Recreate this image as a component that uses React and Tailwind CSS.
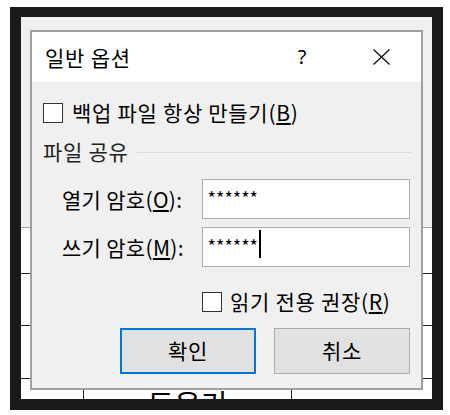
import React from "react";

function Checkbox() {
  return <div className="w-[20px] h-[20px] border-[1.5px] border-[#333] bg-white shrink-0" />;
}

export default function App() {
  const font = "font-['Noto_Sans_CJK_KR','Noto_Sans',sans-serif]";
  return (
    <div className={`w-[450px] h-[415px] bg-white pt-[7px] pl-[10px] ${font} text-black`}>
      <div className="w-[433px] h-[403px] bg-[#1a1a1a] pt-[10px] pl-[11px]">
        <div className="w-[411px] h-[382px] relative overflow-hidden bg-white">
          {/* background sheet */}
          <div className="h-[211px] bg-[#f0f0f0] border-b border-[#a0a0a0]" />
          <div className="grid grid-cols-[63px_208px_1fr] h-[46px] border-b border-[#1f1f1f]">
            <div className="border-r border-[#1f1f1f]" />
            <div className="border-r border-[#1f1f1f]" />
            <div />
          </div>
          <div className="grid grid-cols-[63px_208px_1fr] h-[52px] border-b border-[#1f1f1f]">
            <div className="border-r border-[#1f1f1f]" />
            <div className="border-r border-[#1f1f1f]" />
            <div />
          </div>
          <div className="grid grid-cols-[63px_208px_1fr] h-[53px] border-b border-[#1f1f1f]">
            <div className="border-r border-[#1f1f1f]" />
            <div className="border-r border-[#1f1f1f]" />
            <div />
          </div>
          <div className="grid grid-cols-[63px_208px_1fr] h-[60px]">
            <div className="border-r border-[#1f1f1f]" />
            <div className="border-r border-[#1f1f1f] flex justify-center pt-[8px] text-[29px] leading-[32px]">
              도움기
            </div>
            <div />
          </div>

          {/* dialog */}
          <div className="absolute left-[9px] top-[13px] w-[393px] h-[360px] border-2 border-[#a0a0a0] bg-[#f0f0f0] flex flex-col">
            <div className="h-[50px] bg-white flex items-center pl-[13px] shrink-0">
              <div className="flex-1 text-[21px] leading-[24px] tracking-[0.8px] mt-[-1px]">일반 옵션</div>
              <div className="w-[40px] flex justify-center text-[20px] leading-[24px] font-['Noto_Sans',sans-serif]">?</div>
              <div className="w-[46px] ml-[36px] mr-[17px] flex justify-center">
                <svg width="17" height="16" viewBox="0 0 17 16">
                  <path d="M0.5 0.5 L16.5 15.5 M16.5 0.5 L0.5 15.5" stroke="#111" strokeWidth="1.3" fill="none" />
                </svg>
              </div>
            </div>

            <div className="flex-1 flex flex-col pl-[11px] pr-[11px] text-[21px] tracking-[0.7px]">
              <div className="mt-[20px] h-[22px] flex items-center">
                <Checkbox />
                <span className="ml-[9px] leading-[22px] whitespace-nowrap mt-[-2px]">
                  백업 파일 항상 만들기(<span className="underline underline-offset-2">B</span>)
                </span>
              </div>

              <div className="mt-[17px] h-[22px] flex items-center">
                <span className="leading-[22px] text-[#222] whitespace-nowrap mt-[-3px]">파일 공유</span>
                <div className="flex-1 h-px bg-[#dcdcdc] ml-[9px] mr-[-1px]" />
              </div>

              <div className="mt-[16px] h-[40px] flex items-center">
                <div className="w-[159px] pl-[19px] leading-[22px] whitespace-nowrap tracking-[0.3px] mt-[-1px]">
                  열기 암호(<span className="underline underline-offset-2">O</span>):
                </div>
                <div className="w-[209px] h-[40px] border border-[#acacac] bg-white flex items-start pl-[5px] pt-[7px] text-[18px] leading-[20px] tracking-normal">
                  ******
                </div>
              </div>

              <div className="mt-[8px] h-[40px] flex items-center">
                <div className="w-[159px] pl-[19px] leading-[22px] whitespace-nowrap tracking-[0.3px] mt-[-1px]">
                  쓰기 암호(<span className="underline underline-offset-2">M</span>):
                </div>
                <div className="w-[209px] h-[40px] border border-[#acacac] bg-white flex items-start pl-[5px] pt-[7px] text-[18px] leading-[20px] tracking-normal">
                  <span>******</span>
                  <div className="w-[1.5px] h-[28px] bg-black mt-[-5px] ml-[1px]" />
                </div>
              </div>

              <div className="mt-[24px] h-[22px] flex items-center pl-[159px]">
                <Checkbox />
                <span className="ml-[8px] leading-[22px] whitespace-nowrap mt-[-2px]">
                  읽기 전용 권장(<span className="underline underline-offset-2">R</span>)
                </span>
              </div>

              <div className="mt-[15px] flex justify-end gap-[18px]">
                <div className="w-[136px] h-[46px] border-2 border-[#0078d7] bg-[#e1e1e1] flex items-center justify-center leading-[22px] pb-[2px]">
                  확인
                </div>
                <div className="w-[136px] h-[46px] border border-[#adadad] bg-[#e1e1e1] flex items-center justify-center leading-[22px] pb-[2px]">
                  취소
                </div>
              </div>
            </div>
          </div>
        </div>
      </div>
    </div>
  );
}
